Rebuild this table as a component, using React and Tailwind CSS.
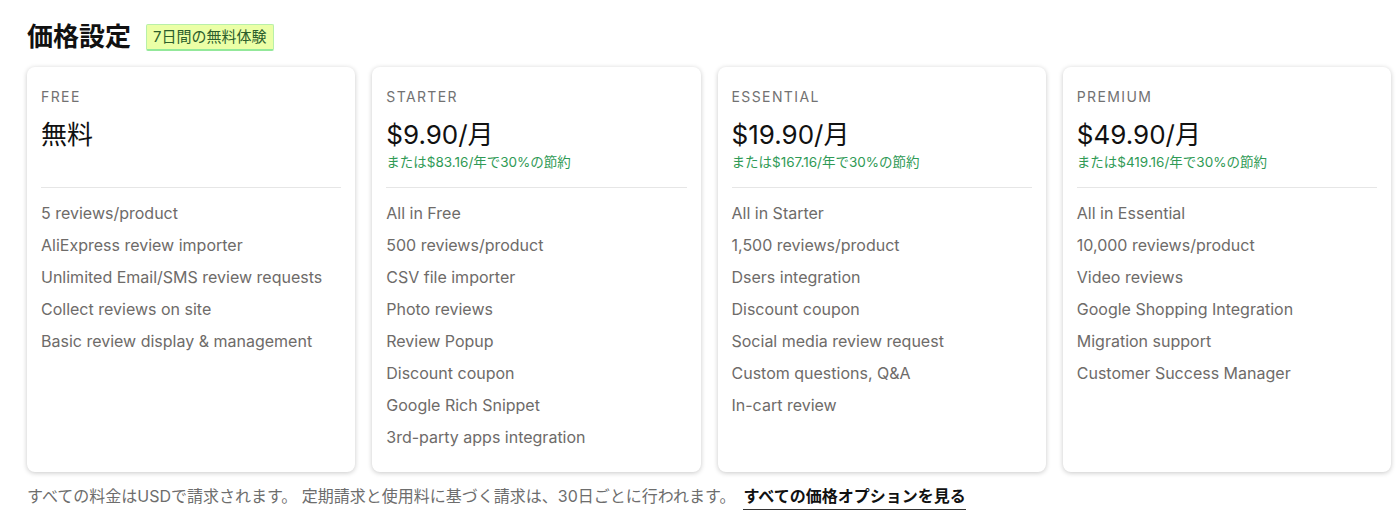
import React from "react";

const plans = [
  {
    name: "FREE",
    price: "無料",
    yearly: null,
    features: [
      "5 reviews/product",
      "AliExpress review importer",
      "Unlimited Email/SMS review requests",
      "Collect reviews on site",
      "Basic review display & management",
    ],
  },
  {
    name: "STARTER",
    price: "$9.90/月",
    yearly: "または$83.16/年で30%の節約",
    features: [
      "All in Free",
      "500 reviews/product",
      "CSV file importer",
      "Photo reviews",
      "Review Popup",
      "Discount coupon",
      "Google Rich Snippet",
      "3rd-party apps integration",
    ],
  },
  {
    name: "ESSENTIAL",
    price: "$19.90/月",
    yearly: "または$167.16/年で30%の節約",
    features: [
      "All in Starter",
      "1,500 reviews/product",
      "Dsers integration",
      "Discount coupon",
      "Social media review request",
      "Custom questions, Q&A",
      "In-cart review",
    ],
  },
  {
    name: "PREMIUM",
    price: "$49.90/月",
    yearly: "または$419.16/年で30%の節約",
    features: [
      "All in Essential",
      "10,000 reviews/product",
      "Video reviews",
      "Google Shopping Integration",
      "Migration support",
      "Customer Success Manager",
    ],
  },
];

const PlanCard = ({ plan }) => (
  <div className="bg-white rounded-lg shadow-[0_1px_5px_rgba(0,0,0,0.22)] px-[14px] pt-[20px] pb-[19px]">
    <div className="text-[14px] leading-[20px] tracking-[0.1em] text-[#727272]">
      {plan.name}
    </div>
    <div className="mt-[12px] text-[26px] leading-[32px] text-[#111]">
      {plan.price}
    </div>
    <div className="mt-[3px] h-[16px] text-[13.5px] leading-[16px] text-[#2f9a55]">
      {plan.yearly}
    </div>
    <div className="mt-[17px] border-t border-[#e6e6e6]" />
    <ul className="mt-[9px]">
      {plan.features.map((f) => (
        <li key={f} className="text-[16px] leading-[32px] text-[#6e6b69]">
          {f}
        </li>
      ))}
    </ul>
  </div>
);

const App = () => {
  return (
    <div
      className="min-h-screen bg-white pl-[27px] pr-[9px] pt-[21px]"
      style={{ fontFamily: "Inter, 'Noto Sans CJK JP', sans-serif" }}
    >
      <div className="flex items-center gap-[15px] h-[32px]">
        <h1 className="text-[26px] font-bold text-[#111] leading-[32px]">
          価格設定
        </h1>
        <span className="bg-[#ebffa6] border border-[#b8f0a8] border-b-2 border-b-[#93e89a] text-[#2c5e2c] text-[15px] leading-[24px] px-[6px] rounded-[2px]">
          7日間の無料体験
        </span>
      </div>
      <div className="grid grid-cols-4 gap-[17px] mt-[14px]">
        {plans.map((p) => (
          <PlanCard key={p.name} plan={p} />
        ))}
      </div>
      <div className="mt-[14px] flex items-start text-[16px] leading-[20px] text-[#6d6d6d]">
        <span>すべての料金はUSDで請求されます。 定期請求と使用料に基づく請求は、30日ごとに行われます。</span>
        <a
          href="#"
          className="ml-[8px] font-bold text-[#111] border-b border-[#333] pb-[3px]"
        >
          すべての価格オプションを見る
        </a>
      </div>
    </div>
  );
};

export default App;
